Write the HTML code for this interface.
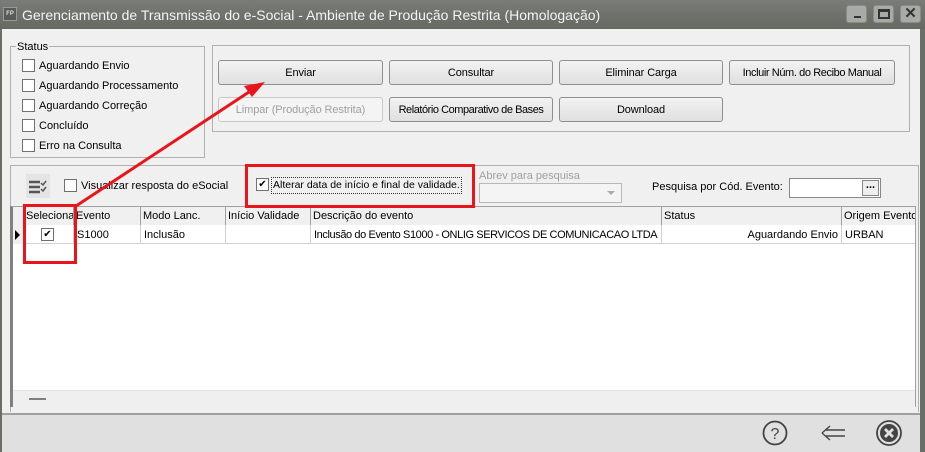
<!DOCTYPE html>
<html><head><style>
*{box-sizing:border-box;margin:0;padding:0}
body{width:925px;height:452px;overflow:hidden;background:#f0f0f0;font-family:"Liberation Sans",sans-serif;font-size:11px;color:#000;position:relative;white-space:nowrap}
.a{position:absolute}
.title{left:0;top:0;width:925px;height:29px;background:linear-gradient(#7a7c77,#666862);color:#f4f4f4;font-size:14px;line-height:30px;padding-left:22px}
.fp{left:3px;top:7px;width:14px;height:14px;background:#5a5a5a;border:1px solid #999;color:#ddd;font-size:6px;line-height:12px;text-align:center;font-weight:bold}
.wb{top:5px;width:21px;height:18px;background:#a9a9a7;border:1px solid #8a8a88;border-radius:3px}
.grp{border:1px solid #b0b0b0}
.cb{width:13px;height:13px;border:1px solid #707070;background:#fff}
.btn{height:25px;border:1px solid #8e8f8f;border-radius:3px;background:linear-gradient(#f2f2f2,#e0e0e0);text-align:center;line-height:25px;font-size:11px;letter-spacing:-0.1px}
.dis{color:#a0a0a0;border-color:#c8c8c8;background:#f4f4f4}
.red{border:3px solid #e8161b}
.hc{top:0;height:18px;border-right:1px solid #a0a0a0;line-height:19px;padding-left:2px;background:#f0f0f0;overflow:hidden}
.dc{top:0;height:19px;border-right:1px solid #d0d0d0;line-height:20px;padding-left:3px;overflow:hidden}
.t{line-height:15px}
</style></head><body>
<div class="a title">Gerenciamento de Transmissão do e-Social - Ambiente de Produção Restrita (Homologação)</div>
<div class="a fp">FP</div>
<div class="a wb" style="left:846px"><div class="a" style="left:7px;top:10px;width:7px;height:2px;background:#333"></div></div>
<div class="a wb" style="left:873px"><div class="a" style="left:4px;top:3px;width:12px;height:10px;border:2px solid #333;border-top-width:3px"></div></div>
<div class="a wb" style="left:900px;font-weight:bold;font-size:15px;line-height:16px;text-align:center;color:#333">✕</div>
<div class="a" style="left:0;top:29px;width:2px;height:423px;background:#6b6d68"></div>
<div class="a" style="left:920px;top:29px;width:5px;height:423px;background:#6b6d68"></div>

<div class="a grp" style="left:10px;top:46px;width:195px;height:112px"></div>
<div class="a t" style="left:16px;top:40px;background:#f0f0f0;padding:0 1px">Status</div>
<div class="a cb" style="left:22px;top:59px"></div><div class="a t" style="left:39px;top:59px">Aguardando Envio</div>
<div class="a cb" style="left:22px;top:79px"></div><div class="a t" style="left:39px;top:79px">Aguardando Processamento</div>
<div class="a cb" style="left:22px;top:99px"></div><div class="a t" style="left:39px;top:99px">Aguardando Correção</div>
<div class="a cb" style="left:22px;top:119px"></div><div class="a t" style="left:39px;top:119px">Concluído</div>
<div class="a cb" style="left:22px;top:139px"></div><div class="a t" style="left:39px;top:139px">Erro na Consulta</div>

<div class="a grp" style="left:212px;top:45px;width:698px;height:87px"></div>
<div class="a btn" style="left:218px;top:60px;width:165px">Enviar</div>
<div class="a btn" style="left:389px;top:60px;width:164px">Consultar</div>
<div class="a btn" style="left:559px;top:60px;width:164px">Eliminar Carga</div>
<div class="a btn" style="left:729px;top:60px;width:166px;letter-spacing:-0.4px">Incluir Núm. do Recibo Manual</div>
<div class="a btn dis" style="left:218px;top:97px;width:165px">Limpar (Produção Restrita)</div>
<div class="a btn" style="left:389px;top:97px;width:164px;letter-spacing:-0.45px">Relatório Comparativo de Bases</div>
<div class="a btn" style="left:559px;top:97px;width:164px">Download</div>

<div class="a" style="left:10px;top:165px;width:909px;height:247px;border:1px solid #b0b0b0;border-bottom:none"></div>
<div class="a" style="left:26px;top:174px;width:24px;height:24px;background:#e4e4e4"><svg width="24" height="24"><g stroke="#555" stroke-width="2.5"><line x1="3" y1="8" x2="14" y2="8"/><line x1="3" y1="13" x2="14" y2="13"/><line x1="3" y1="18" x2="14" y2="18"/></g><g stroke="#555" stroke-width="1.5" fill="none"><path d="M15 9l2 2 3-4M15 15l2 2 3-4"/></g></svg></div>
<div class="a cb" style="left:64px;top:179px"></div><div class="a t" style="left:81px;top:179px">Visualizar resposta do eSocial</div>
<div class="a cb" style="left:256px;top:178px;font-size:10px;line-height:11px;text-align:center">✔</div>
<div class="a t" style="left:271px;top:177px;border:1px dotted #333;padding:0 1px;font-size:10.5px">Alterar data de início e final de validade.</div>
<div class="a t" style="left:479px;top:169px;color:#a0a0a0">Abrev para pesquisa</div>
<div class="a" style="left:479px;top:183px;width:143px;height:20px;border:1px solid #b8b8b8;background:#f4f4f4"><div class="a" style="left:127px;top:7px;border:4px solid transparent;border-top:4px solid #aaa"></div></div>
<div class="a t" style="left:652px;top:180px">Pesquisa por Cód. Evento:</div>
<div class="a" style="left:789px;top:178px;width:92px;height:20px;border:1px solid #888;background:#fff"><div class="a" style="left:72px;top:1px;width:17px;height:16px;border:1px solid #888;background:#eee;text-align:center;line-height:9px;font-weight:bold">...</div></div>

<div class="a" style="left:10px;top:206px;width:906px;height:201px;background:#fff;border-left:3px solid #808080;border-top:1px solid #a0a0a0;border-right:1px solid #a0a0a0;overflow:hidden">
 <div class="a" style="left:0;top:0;width:906px;height:18px;background:#f0f0f0;border-bottom:1px solid #a0a0a0"></div>
 <div class="a hc" style="left:0;width:11px"></div>
 <div class="a hc" style="left:11px;width:50px">Seleciona</div>
 <div class="a hc" style="left:61px;width:67px">Evento</div>
 <div class="a hc" style="left:128px;width:85px">Modo Lanc.</div>
 <div class="a hc" style="left:213px;width:85px">Início Validade</div>
 <div class="a hc" style="left:298px;width:351px">Descrição do evento</div>
 <div class="a hc" style="left:649px;width:180px">Status</div>
 <div class="a hc" style="left:829px;width:80px">Origem Evento</div>
 <div class="a" style="left:0;top:18px;width:906px;height:19px;border-bottom:1px solid #d0d0d0">
  <div class="a dc" style="left:0;width:11px;background:#f0f0f0;border-right:1px solid #a0a0a0"><div class="a" style="left:2px;top:5px;border:5px solid transparent;border-left:5px solid #000;border-right:none"></div></div>
  <div class="a dc" style="left:11px;width:50px"><div class="a cb" style="left:17px;top:3px;font-size:10px;line-height:11px;text-align:center">✔</div></div>
  <div class="a dc" style="left:61px;width:67px">S1000</div>
  <div class="a dc" style="left:128px;width:85px">Inclusão</div>
  <div class="a dc" style="left:213px;width:85px"></div>
  <div class="a dc" style="left:298px;width:351px;letter-spacing:-0.4px">Inclusão do Evento S1000 - ONLIG SERVICOS DE COMUNICACAO LTDA</div>
  <div class="a dc" style="left:649px;width:180px;text-align:right;padding-right:3px">Aguardando Envio</div>
  <div class="a dc" style="left:829px;width:80px">URBAN</div>
 </div>
 <div class="a" style="left:0;top:183px;width:906px;height:18px;background:#efefef;border-top:1px solid #e4e4e4"><div class="a" style="left:16px;top:7px;width:17px;height:2px;background:#808080"></div></div>
</div>

<div class="a" style="left:2px;top:413px;width:918px;height:39px;background:#e0e0e0;border-top:2px solid #a0a0a0"></div>
<svg class="a" style="left:760px;top:419px" width="160" height="30">
 <circle cx="15" cy="14" r="11.5" fill="none" stroke="#444" stroke-width="1.8"/>
 <text x="15" y="20" text-anchor="middle" font-family="Liberation Sans" font-size="16" fill="#444">?</text>
 <path d="M62 14l8-7M62 14l8 7M66 11h19M66 17h19" fill="none" stroke="#444" stroke-width="1.4"/>
 <circle cx="129" cy="14" r="12" fill="none" stroke="#444" stroke-width="1.8"/>
 <circle cx="129" cy="14" r="9" fill="#444"/>
 <path d="M125 10l8 8M133 10l-8 8" stroke="#e0e0e0" stroke-width="2.8"/>
</svg>

<div class="a red" style="left:245px;top:164px;width:230px;height:44px"></div>
<div class="a red" style="left:23px;top:204px;width:54px;height:60px"></div>
<svg class="a" style="left:0;top:0" width="925" height="452">
 <line x1="76" y1="206" x2="252" y2="90" stroke="#e8161b" stroke-width="3"/>
 <polygon points="265,82 244,86 252,97" fill="#e8161b"/>
</svg>
</body></html>
